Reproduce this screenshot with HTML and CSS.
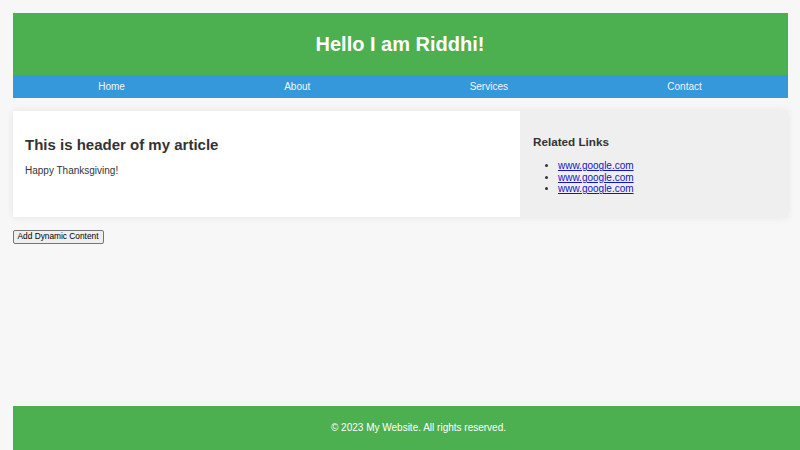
FILE: index.html
```html
<!DOCTYPE html>
<html lang="en">
<head>
<meta charset="utf-8">
<title>Hello I am Riddhi!</title>
<link rel="stylesheet" href="styles.css">
</head>
<body>
<header class="site-header">
  <h1 class="site-title">Hello I am Riddhi!</h1>
</header>
<nav class="site-nav">
  <a href="#" class="nav-link">Home</a>
  <a href="#" class="nav-link">About</a>
  <a href="#" class="nav-link">Services</a>
  <a href="#" class="nav-link">Contact</a>
</nav>
<main class="content">
  <article class="article">
    <h2 class="article-title">This is header of my article</h2>
    <p class="article-text">Happy Thanksgiving!</p>
  </article>
  <aside class="sidebar">
    <h3 class="sidebar-title">Related Links</h3>
    <ul class="link-list">
      <li><a href="#">www.google.com</a></li>
      <li><a href="#">www.google.com</a></li>
      <li><a href="#">www.google.com</a></li>
    </ul>
  </aside>
</main>
<button class="add-btn" type="button">Add Dynamic Content</button>
<footer class="site-footer">
  <p class="footer-text">© 2023 My Website. All rights reserved.</p>
</footer>
</body>
</html>
```
FILE: styles.css
```css
html, body {
  height: 100%;
}
body {
  margin: 0;
  padding: 12.5px;
  box-sizing: border-box;
  background: #f7f7f7;
  font-family: "Liberation Sans", Arial, sans-serif;
  font-size: 10px;
  color: #333;
}
.site-header {
  background: #4caf50;
  color: #fff;
  text-align: center;
  padding: 20px 0;
}
.site-title {
  margin: 0;
  font-size: 20px;
  line-height: 22.5px;
  font-weight: bold;
}
.site-nav {
  background: #3498db;
  display: flex;
  justify-content: space-around;
  padding: 5.75px 6px;
}
.nav-link {
  color: #f2f6fb;
  text-decoration: none;
  font-size: 10px;
  line-height: 11.5px;
}
.content {
  display: flex;
  margin-top: 13px;
  box-shadow: 0 0 8px rgba(0, 0, 0, 0.08);
}
.article {
  flex: 2 1 0;
  background: #fff;
  padding: 12.5px;
}
.sidebar {
  flex: 1 1 0;
  background: #efefef;
  padding: 12.5px 13.5px;
}
.article-title {
  font-size: 15px;
  margin: 12.45px 0;
  line-height: 17px;
}
.article-text {
  margin: 10px 0;
  line-height: 11.5px;
}
.sidebar-title {
  font-size: 11.7px;
  margin: 11.7px 0;
  line-height: 13.5px;
}
.link-list {
  margin: 10px 0;
  padding-left: 25px;
  line-height: 11.5px;
}
.link-list a {
  color: #1414c8;
}
.add-btn {
  margin-top: 13px;
  font-family: "Liberation Sans", Arial, sans-serif;
  font-size: 8.33px;
  padding: 1px 4px;
  line-height: 9.5px;
  background: #efefef;
  border: 1px solid #767676;
  border-radius: 2px;
  color: #000;
}
.site-footer {
  position: fixed;
  left: 12.5px;
  bottom: 0;
  width: calc(100% + 12px);
  padding: 16.25px 0;
  background: #4caf50;
  color: #fff;
  text-align: center;
}
.footer-text {
  margin: 0;
  line-height: 11.5px;
}
```
